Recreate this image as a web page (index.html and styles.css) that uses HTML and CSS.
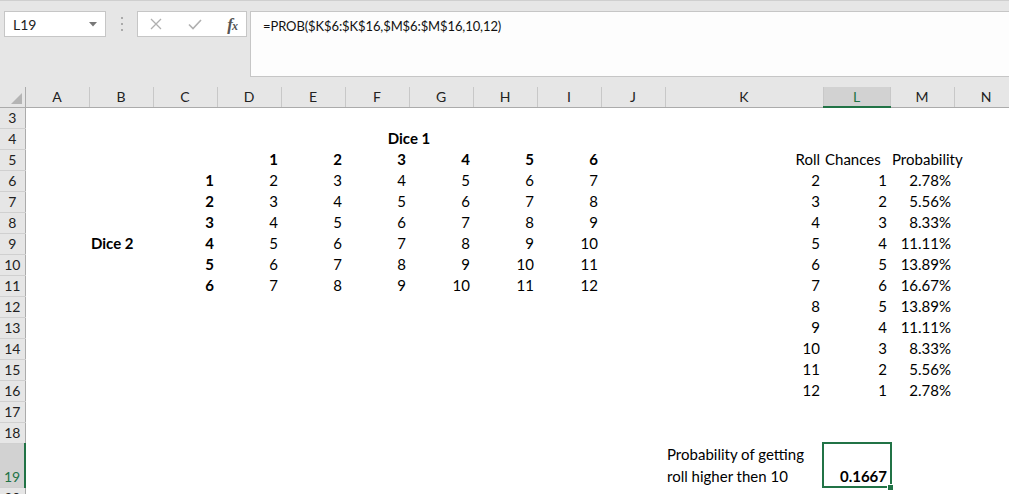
FILE: index.html
```html
<!DOCTYPE html>
<html lang="en">
<head>
  <meta charset="UTF-8">
  <title>PROB - Dice</title>
  <link rel="stylesheet" href="styles.css">
</head>
<body>

<!-- formula bar -->
<div class="topbar">
  <div class="namebox">
    <span>L19</span>
    <svg class="caret" width="8" height="5" viewBox="0 0 8 5"><path d="M0 0h8L4 4.5z" fill="#777"/></svg>
  </div>
  <svg class="grip" width="3" height="16" viewBox="0 0 3 16">
    <rect x="0" y="1" width="2" height="2" fill="#aaa"/>
    <rect x="0" y="7" width="2" height="2" fill="#aaa"/>
    <rect x="0" y="13" width="2" height="2" fill="#aaa"/>
  </svg>
  <div class="fxbox">
    <svg width="12" height="12" viewBox="0 0 12 12"><path d="M1 1l10 10M11 1L1 11" stroke="#b0b0b0" stroke-width="1.3" fill="none"/></svg>
    <svg width="14" height="11" viewBox="0 0 14 11"><path d="M1 5.5l4 4L13 1" stroke="#b0b0b0" stroke-width="1.6" fill="none"/></svg>
    <span class="fx">f<small>x</small></span>
  </div>
  <div class="formula">=PROB($K$6:$K$16,$M$6:$M$16,10,12)</div>
</div>

<!-- sheet -->
<table class="sheet">
  <colgroup>
    <col class="c-row">
    <col><col><col><col><col><col><col><col><col><col>
    <col class="c-k"><col class="c-l"><col><col>
  </colgroup>
  <thead>
    <tr>
      <th class="corner"><span class="tri"></span></th>
      <th>A</th><th>B</th><th>C</th><th>D</th><th>E</th><th>F</th><th>G</th>
      <th>H</th><th>I</th><th>J</th><th>K</th><th class="sel">L</th><th>M</th><th>N</th>
    </tr>
  </thead>
  <tbody>
    <tr><th>3</th><td></td><td></td><td></td><td></td><td></td><td></td><td></td><td></td><td></td><td></td><td></td><td></td><td></td><td></td></tr>
    <tr><th>4</th><td></td><td></td><td></td><td colspan="6" class="b c">Dice 1</td><td></td><td></td><td></td><td></td><td></td></tr>
    <tr><th>5</th><td></td><td></td><td></td>
      <td class="b">1</td><td class="b">2</td><td class="b">3</td><td class="b">4</td><td class="b">5</td><td class="b">6</td>
      <td></td><td>Roll</td><td class="l">Chances</td><td class="l">Probability</td><td></td></tr>
    <tr><th>6</th><td></td><td></td><td class="b">1</td>
      <td>2</td><td>3</td><td>4</td><td>5</td><td>6</td><td>7</td>
      <td></td><td>2</td><td>1</td><td>2.78%</td><td></td></tr>
    <tr><th>7</th><td></td><td></td><td class="b">2</td>
      <td>3</td><td>4</td><td>5</td><td>6</td><td>7</td><td>8</td>
      <td></td><td>3</td><td>2</td><td>5.56%</td><td></td></tr>
    <tr><th>8</th><td></td><td></td><td class="b">3</td>
      <td>4</td><td>5</td><td>6</td><td>7</td><td>8</td><td>9</td>
      <td></td><td>4</td><td>3</td><td>8.33%</td><td></td></tr>
    <tr><th>9</th><td></td><td class="b l">Dice 2</td><td class="b">4</td>
      <td>5</td><td>6</td><td>7</td><td>8</td><td>9</td><td>10</td>
      <td></td><td>5</td><td>4</td><td>11.11%</td><td></td></tr>
    <tr><th>10</th><td></td><td></td><td class="b">5</td>
      <td>6</td><td>7</td><td>8</td><td>9</td><td>10</td><td>11</td>
      <td></td><td>6</td><td>5</td><td>13.89%</td><td></td></tr>
    <tr><th>11</th><td></td><td></td><td class="b">6</td>
      <td>7</td><td>8</td><td>9</td><td>10</td><td>11</td><td>12</td>
      <td></td><td>7</td><td>6</td><td>16.67%</td><td></td></tr>
    <tr><th>12</th><td></td><td></td><td></td><td></td><td></td><td></td><td></td><td></td><td></td><td></td><td>8</td><td>5</td><td>13.89%</td><td></td></tr>
    <tr><th>13</th><td></td><td></td><td></td><td></td><td></td><td></td><td></td><td></td><td></td><td></td><td>9</td><td>4</td><td>11.11%</td><td></td></tr>
    <tr><th>14</th><td></td><td></td><td></td><td></td><td></td><td></td><td></td><td></td><td></td><td></td><td>10</td><td>3</td><td>8.33%</td><td></td></tr>
    <tr><th>15</th><td></td><td></td><td></td><td></td><td></td><td></td><td></td><td></td><td></td><td></td><td>11</td><td>2</td><td>5.56%</td><td></td></tr>
    <tr><th>16</th><td></td><td></td><td></td><td></td><td></td><td></td><td></td><td></td><td></td><td></td><td>12</td><td>1</td><td>2.78%</td><td></td></tr>
    <tr><th>17</th><td></td><td></td><td></td><td></td><td></td><td></td><td></td><td></td><td></td><td></td><td></td><td></td><td></td><td></td></tr>
    <tr><th>18</th><td></td><td></td><td></td><td></td><td></td><td></td><td></td><td></td><td></td><td></td><td></td><td></td><td></td><td></td></tr>
    <tr class="tall"><th class="sel">19</th><td></td><td></td><td></td><td></td><td></td><td></td><td></td><td></td><td></td><td></td>
      <td class="l wrap">Probability of getting roll higher then 10</td><td class="b active">0.1667</td><td></td><td></td></tr>
    <tr><th>20</th><td></td><td></td><td></td><td></td><td></td><td></td><td></td><td></td><td></td><td></td><td></td><td></td><td></td><td></td></tr>
  </tbody>
</table>

</body>
</html>
```

FILE: styles.css
```css
:root{
  --c-bar:#e6e6e6; --c-line:#c6c6c6; --c-head-line:#ababab;
  --c-text:#000; --c-sel:#d2d2d2; --c-green:#217346;
}
body{
  margin:0;width:1009px;height:494px;overflow:hidden;background:#fff;
  font-family:Lato,"Liberation Sans",sans-serif;color:var(--c-text)
}

/* ---- formula bar ---- */
.topbar{
  height:87px;box-sizing:border-box;background:var(--c-bar);
  border-top:1px solid #cfcfcf;padding:10px 0 0 4px;
  display:flex;align-items:flex-start
}
.namebox{
  width:102px;height:26px;box-sizing:border-box;background:#fff;border:1px solid var(--c-line);
  display:flex;align-items:center;justify-content:space-between;padding:0 8px 0 8px;
  font-size:14px;color:#222
}
.grip{margin:5px 0 0 15px}
.fxbox{
  width:110px;height:26px;box-sizing:border-box;margin-left:13px;background:#fff;border:1px solid var(--c-line);
  display:flex;align-items:center;justify-content:space-between;padding:0 9px 0 12px
}
.fx{font-family:"Liberation Serif",serif;font-style:italic;font-weight:700;font-size:17px;color:#555;letter-spacing:-1px;line-height:1}
.fx small{font-size:12px}
.formula{
  flex:1;height:66px;box-sizing:border-box;margin-left:3px;background:#fdfdfd;border:1px solid var(--c-line);
  border-right:none;padding:5px 12px;font-size:13px;letter-spacing:-0.1px;line-height:18px;color:#111
}

/* ---- sheet ---- */
.sheet{table-layout:fixed;border-collapse:collapse;width:1018px;font-size:15px}
.sheet col{width:64px}
.sheet col.c-row{width:25px}
.sheet col.c-k{width:158px}
.sheet col.c-l{width:67px}

.sheet thead tr{height:20px}
.sheet thead th{
  background:var(--c-bar);font-weight:400;font-size:14px;color:#222;padding:0;
  border-right:1px solid #c8c8c8;border-bottom:1px solid var(--c-head-line);text-align:center
}
.sheet thead th.corner{position:relative;border-right:1px solid var(--c-head-line)}
.tri{
  position:absolute;right:3px;bottom:3px;width:0;height:0;
  border-left:11px solid transparent;border-bottom:11px solid #b4b4b4
}
.sheet thead th.sel{background:var(--c-sel);color:var(--c-green);border-bottom:2px solid var(--c-green)}

.sheet tbody tr{height:21px}
.sheet tbody tr.tall{height:42px}
.sheet tbody th{
  background:var(--c-bar);font-weight:400;font-size:14px;color:#222;padding:0 0 1px;
  border-right:1px solid var(--c-head-line);border-bottom:1px solid #d0d0d0;
  text-align:center;vertical-align:bottom;line-height:18px
}
.sheet tbody th.sel{background:var(--c-sel);color:var(--c-green);border-right:2px solid var(--c-green)}

.sheet td{
  padding:0 3px 1px;text-align:right;vertical-align:bottom;white-space:nowrap;
  line-height:19px;overflow:visible
}
.sheet td.l{text-align:left;padding-left:2px}
.sheet td.c{text-align:center}
.sheet td.b{font-weight:700}
.sheet td.wrap{white-space:normal;line-height:22px;padding-bottom:0}
.sheet td.active{position:relative}
.sheet td.active::after{
  content:"";position:absolute;left:-1px;top:-1px;right:-2px;bottom:-1px;
  border:2px solid var(--c-green)
}
.sheet td.active::before{
  content:"";position:absolute;right:-4px;bottom:-4px;width:5px;height:5px;
  background:var(--c-green);border:1px solid #fff;z-index:1
}
```
